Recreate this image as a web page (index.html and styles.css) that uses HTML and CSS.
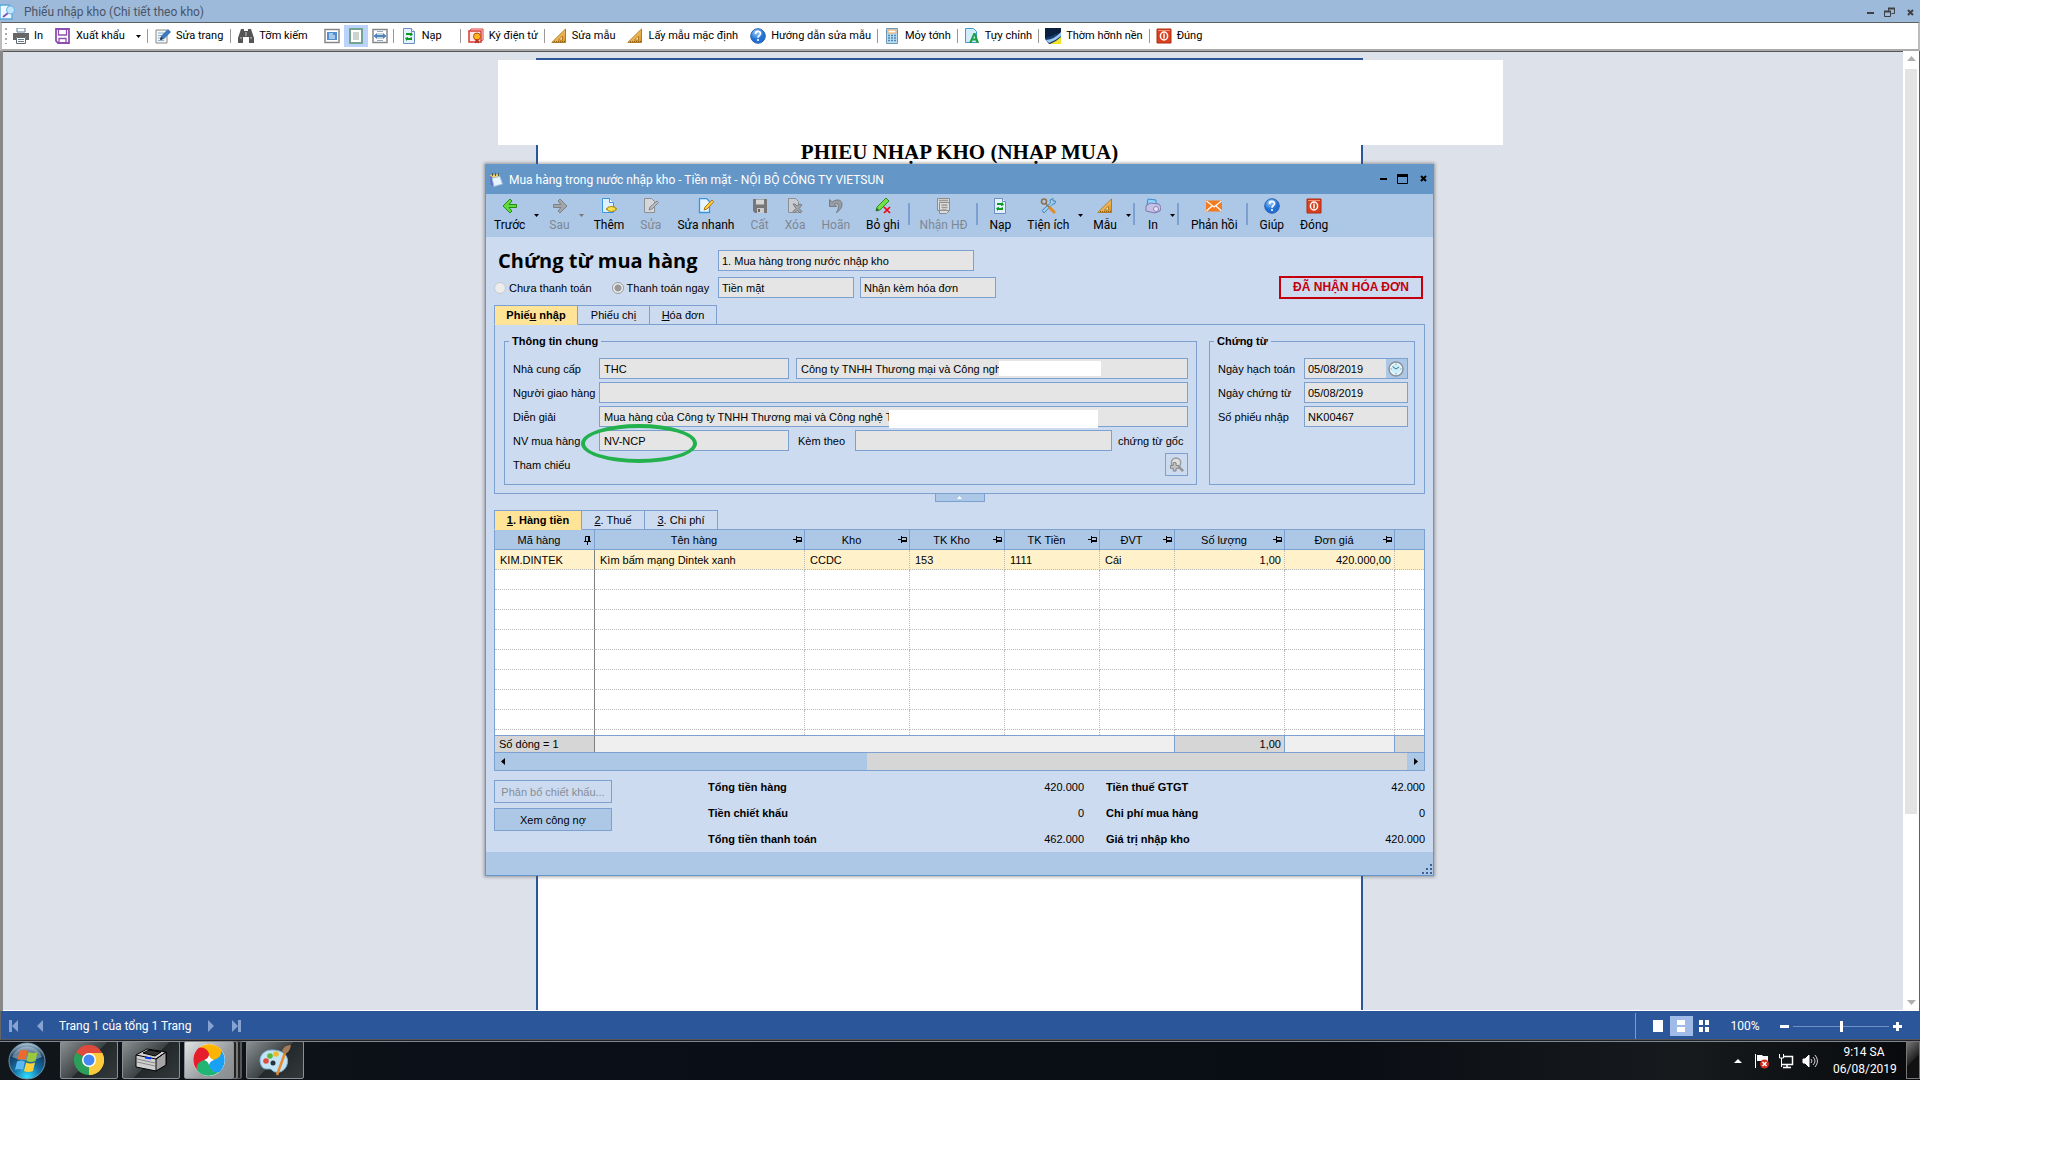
FILE: index.html
```html
<!DOCTYPE html>
<html lang="vi">
<head>
<meta charset="utf-8">
<title>Phiếu nhập kho</title>
<link rel="stylesheet" href="styles.css">
</head>
<body>
<svg class="defs" aria-hidden="true">
  <linearGradient id="gGold" x2="1" y2="1"><stop stop-color="#ffe9a0"/><stop offset="1" stop-color="#d98e1c"/></linearGradient>
  <radialGradient id="gHelp" cx=".4" cy=".25"><stop stop-color="#9cd0ff"/><stop offset="1" stop-color="#1f6fd6"/></radialGradient>
  <symbol id="printer" viewBox="0 0 16 16"><path d="M4 0h8v4H4z" fill="#fff" stroke="#5b7f9d"/><path d="M0 5h16v7h-3V9H3v3H0z" fill="#666"/><path d="M3.500 9.500h9v6h-9z" fill="#fff" stroke="#666"/><path d="M5 11.500h6M5 13.500h6" stroke="#5b7f9d"/></symbol>
  <symbol id="floppy" viewBox="0 0 16 16"><path d="M1 1h13v14H3l-2-2z" fill="#fff" stroke="#8e4fb0" stroke-width="1.800"/><path d="M3.500 1v6h8V1M4 15v-4.500h7V15" fill="none" stroke="#8e4fb0" stroke-width="1.300"/></symbol>
  <symbol id="pageedit" viewBox="0 0 16 16"><path d="M1 2h11v13H1z" fill="#f5f5f5" stroke="#888"/><path d="M3 5h6M3 7.500h4M3 10h4M3 12.500h6" stroke="#8bb0d6"/><path d="M5 12l1-4 7-7 3 3-7 7z" fill="#3d78bd"/><path d="M5 12l1-3 2 2z" fill="#222"/></symbol>
  <symbol id="binoc" viewBox="0 0 16 16"><path d="M3 1h3v2h4V1h3l3 9v5h-5V9H5v6H0v-5z" fill="#555"/><path d="M2 10h2M12 10h2M8 4v4" stroke="#ccc"/></symbol>
  <symbol id="viewtext" viewBox="0 0 16 16"><path d="M1 1.500h14v13H1z" fill="#fff" stroke="#888" stroke-width="1.500"/><path d="M3 4h10v8H3z" fill="#4f90d0"/><path d="M5 6h4M5 8h6M5 10h6" stroke="#fff"/></symbol>
  <symbol id="viewpage" viewBox="0 0 16 16"><path d="M2 1h12v14H2z" fill="#fff" stroke="#74a48c" stroke-width="2"/><path d="M5 5h6M5 7h6M5 9h6M5 11h6" stroke="#9aa8a0"/></symbol>
  <symbol id="viewwide" viewBox="0 0 16 16"><path d="M1 1.500h14v13H1z" fill="#fff" stroke="#888" stroke-width="1.500"/><path d="M5 3.500h6M5 12.500h6M5 6h6M5 10h6" stroke="#9ab"/><path d="M1.500 8L5 5v2h6V5l3.500 3L11 11V9H5v2z" fill="#4a83bd"/></symbol>
  <symbol id="reload" viewBox="0 0 16 16"><path d="M2.500.5h8l3 3v12h-11z" fill="#e6f1ff" stroke="#6b8ec4"/><path d="M10.500.5v3h3" fill="#fff" stroke="#6b8ec4"/><path d="M5 7V5h5V3.500L12 7l-3 1V7zM11 9v3H6v1.500L4 10l3-1v1h2z" fill="#0a9a1c"/></symbol>
  <symbol id="cert" viewBox="0 0 16 16"><path d="M2 3l1-2h12v11l-2 1" fill="#fff" stroke="#d83a34"/><path d="M1 3h12v11H1z" fill="#ffe9e4" stroke="#d83a34" stroke-width="1.500"/><circle cx="9" cy="8.500" r="3.500" fill="#ffb51c" stroke="#b84a18"/><path d="M7.500 11.500l-.5 4 2-1 2 1-.5-4z" fill="#b8321c"/></symbol>
  <symbol id="setsq" viewBox="0 0 16 16"><path d="M14.500 1v13.500H.8z" fill="url(#gGold)" stroke="#b57b22"/><path d="M11.500 8v4H7.500z" fill="#fff3cf" stroke="#b57b22"/><path d="M3 13.500h11" stroke="#8f5d12" stroke-dasharray="1 1"/></symbol>
  <symbol id="help" viewBox="0 0 16 16"><circle cx="8" cy="8" r="7.300" fill="url(#gHelp)" stroke="#2a62ad"/><path d="M5.500 6c0-3.500 5-3.200 5-.4C10.500 7.300 8 7.500 8 9.800" fill="none" stroke="#fff" stroke-width="1.700"/><circle cx="8" cy="12" r="1.100" fill="#fff"/></symbol>
  <symbol id="calc" viewBox="0 0 16 16"><path d="M2.500.5h11v15h-11z" fill="#bcdcf2" stroke="#6c98b8"/><path d="M4 2h8v3H4z" fill="#fff" stroke="#e2a55a"/><path d="M4 7.500h8M4 10h8M4 12.500h8" stroke="#4e88b8" stroke-width="1.500" stroke-dasharray="2 1"/></symbol>
  <symbol id="custom" viewBox="0 0 16 16"><path d="M1.500.5h8l3 3v11h-11z" fill="#d3ecfb" stroke="#3f9ad0"/><path d="M5 15L9.500 5h2L15 15h-2.500l-.8-2.500H8.500L7.500 15zM9.200 10.500h2l-1-3z" fill="#1fa045"/></symbol>
  <symbol id="wall" viewBox="0 0 16 16"><path d="M0 0h16v16H0z" fill="#123c6e"/><path d="M0 0h16v5C10 5 6 9 0 10z" fill="#0b1f3f"/><path d="M1 12Q10 11 16 4v4Q10 13 4 15z" fill="#9cc8f2"/><path d="M5 16q7-3 11-7v7z" fill="#f6e325"/><path d="M0 11l4 5H0z" fill="#fff"/></symbol>
  <symbol id="power" viewBox="0 0 16 16"><path d="M1 1h14v14H1z" fill="#d9401f" stroke="#b02c10"/><path d="M2 2h12v1H2z" fill="#f19377"/><ellipse cx="8" cy="8" rx="3.600" ry="4" fill="none" stroke="#fff" stroke-width="1.500"/><path d="M8 5.500v5" stroke="#fff" stroke-width="1.500"/></symbol>
  <symbol id="back" viewBox="0 0 16 16"><path d="M1 8l7-7 2 2-3 3.500h7.500v3H7L10 13l-2 2z" fill="#5fdc3a" stroke="#248b1a"/></symbol>
  <symbol id="fwd" viewBox="0 0 16 16"><path d="M15 8L8 1 6 3l3 3.500H1.500v3H9L6 13l2 2z" fill="#a2a6ab" stroke="#7c8085"/></symbol>
  <symbol id="add" viewBox="0 0 16 16"><path d="M1.500.5h7l4 4v10h-11z" fill="#dff1ff" stroke="#3796e0"/><path d="M8.500.5v4h4" fill="#fff" stroke="#3796e0"/><path d="M5 11l2-1 0-1 2 0 1-1 2 1 2 0 0 1 2 1-2 1 0 1-2 0-2 1-1-1-2 0 0-1z" fill="#f7df4e" stroke="#a68b1a"/></symbol>
  <symbol id="gedit" viewBox="0 0 16 16"><path d="M1.500.5h7l3 3v11h-10z" fill="#d4d6d9" stroke="#8b9096"/><path d="M6 12l1-3 7-6 1.500 1.500L9 11z" fill="#b9bcc0" stroke="#85898e"/></symbol>
  <symbol id="edit" viewBox="0 0 16 16"><path d="M1.500.5h7l3 3v11h-10z" fill="#e8f5ff" stroke="#3796e0" stroke-width="1.300"/><path d="M6 12l1-3 7-7 1.800 1.800L9 11z" fill="#ffcf3b" stroke="#b07616"/></symbol>
  <symbol id="gsave" viewBox="0 0 16 16"><path d="M1 1h14v14H3l-2-2z" fill="#777"/><path d="M4 1.500h8v5H4z" fill="#d5d5d5"/><path d="M5 10h7v5H5z" fill="#ccc"/><path d="M6 11h2v3H6z" fill="#666"/></symbol>
  <symbol id="gdel" viewBox="0 0 16 16"><path d="M1.500.5h7l3 3v11h-10z" fill="#c8cbd0" stroke="#8b9096"/><path d="M6 6l2 0 2 2 3-2 2 1-3 3.500 3 3-2 1.500-2.500-3-3 3-1.500-1.500 3-3z" fill="#a4a7ac" stroke="#767a80"/></symbol>
  <symbol id="undo" viewBox="0 0 16 16"><path d="M1.500 1.500v7h7L6.500 6.200C10 4.500 12.500 7 8.500 14.500 16 10 15.500 1.500 9 2 7 2.200 5.500 3 4.200 4z" fill="#999ca1" stroke="#777a80"/></symbol>
  <symbol id="unpost" viewBox="0 0 16 16"><path d="M1 13l1-4 9-9 3 3-9 9z" fill="#6fe04a" stroke="#2c8f20"/><path d="M1 13l1-3 2 2z" fill="#444"/><path d="M9 9l6 6M15 9l-6 6" stroke="#f00010" stroke-width="1.700"/></symbol>
  <symbol id="ginv" viewBox="0 0 16 16"><path d="M1.500.5h12v12h-12zM3.500 4.500h10v8l-3 3h-7z" fill="#dcdcdc" stroke="#8d8d8d"/><path d="M3 2.500h9M5.500 7h6M5.500 9.500h6M5.500 12h5" stroke="#999" stroke-width="1.300"/></symbol>
  <symbol id="tools" viewBox="0 0 16 16"><path d="M2 12.500L10.500 5 10 2l3-1.500V3l2.500 0L15 5.500l-3 1L4 15z" fill="#9fd0f2" stroke="#4684b5"/><circle cx="4" cy="3.500" r="2.500" fill="none" stroke="#8b7452" stroke-width="1.600"/><path d="M5.500 5.500l4 4" stroke="#8b7452" stroke-width="1.600"/><path d="M10 10l4 4" stroke="#e58a1d" stroke-width="3" stroke-linecap="round"/></symbol>
  <symbol id="cprint" viewBox="0 0 16 16"><path d="M3 1l8 1v5H2z" fill="#8fd4ff" stroke="#378ac8"/><path d="M1 8l4-3 9 1 2 3-1 4-5 2-9-2z" fill="#c5c0e6" stroke="#7d78ae"/><circle cx="11" cy="11" r="2.500" fill="#e8e5f8" stroke="#8a84b8"/></symbol>
  <symbol id="mail" viewBox="0 0 16 16"><path d="M0 2.500h16v11H0z" fill="#f47b20"/><path d="M.5 3l7.500 6 7.500-6M.5 13L6 8M15.500 13L10 8" fill="none" stroke="#fff" stroke-width="1.200"/></symbol>
  <symbol id="clock" viewBox="0 0 16 16"><circle cx="8" cy="8" r="7" fill="#c9eff8" stroke="#8a9297" stroke-width="1.500"/><circle cx="8" cy="8" r="5.500" fill="none" stroke="#fff"/><path d="M4.500 5.500L8 8l3-2" fill="none" stroke="#46708a"/><path d="M8 2.500v1M8 12.500v1M2.500 8h1M12.500 8h1" stroke="#46708a"/></symbol>
  <symbol id="zoomadd" viewBox="0 0 16 16"><path d="M10 10l5 5" stroke="#999" stroke-width="3"/><circle cx="7.500" cy="6" r="5" fill="#dedede" stroke="#999" stroke-width="1.500"/><path d="M4.500 6h3v3h3v3h-3v3h-3v-3h-3V9h3z" fill="#c4c4c4" stroke="#808080"/></symbol>
  <symbol id="pin" viewBox="0 0 10 10"><path d="M0 4.500h3M3.500 1v7M3 2.500h5.500V6" fill="none" stroke="#000"/><path d="M3 6h6" stroke="#000" stroke-width="2"/></symbol>
  <symbol id="pinup" viewBox="0 0 10 10"><path d="M4.500 10V7M1 6.500h7M2.500 7V1.500H6" fill="none" stroke="#000"/><path d="M6 7V1" stroke="#000" stroke-width="2"/></symbol>
  <symbol id="down" viewBox="0 0 5 3"><path d="M0 0h5L2.500 3z" fill="currentColor"/></symbol>
  <symbol id="doc" viewBox="0 0 16 16"><path d="M0 1h9l3 3v11H0z" fill="#eef7ff" stroke="#58a6dc" stroke-width="1.300"/><path d="M3 13l5-4" stroke="#7c55c0" stroke-width="2"/><circle cx="10.500" cy="6" r="4" fill="#bfe3fb" stroke="#6eb2e2"/></symbol>
  <symbol id="book" viewBox="0 0 16 16"><path d="M1 3l9-1 1 3-9 2z" fill="#f4d451"/><path d="M1 4l2.500 1L5 14.500l-3-2z" fill="#6f63c9"/><path d="M3 6l8-1.500 2.500 7.500L5 14.500z" fill="#e8f4ff" stroke="#9dbfe4"/><path d="M3.500 1v3M6.500 1v3M9.500 1v3" stroke="#555"/></symbol>
</svg>

<div class="desktop">
  <header class="titlebar">
    <svg class="ic"><use href="#doc"/></svg><span>Phiếu nhập kho (Chi tiết theo kho)</span>
    <svg class="winctl" width="56" height="14" viewBox="0 0 56 14" fill="none" stroke="#3e4046"><path d="M5 8h7" stroke-width="2"/><path d="M26.500 6V3.500h6v5h-3M22.500 6.500h6v5h-6z"/><path d="M26 3.500h7M22 6.500h7" stroke-width="2"/><path d="M46 5l5 5M51 5l-5 5" stroke-width="2"/></svg>
  </header>

  <nav class="toolbar">
    <i class="grip"></i>
    <button><svg class="ic"><use href="#printer"/></svg>In</button>
    <button><svg class="ic"><use href="#floppy"/></svg>Xuất khẩu</button><svg class="arr"><use href="#down"/></svg>
    <i class="sep"></i>
    <button><svg class="ic"><use href="#pageedit"/></svg>Sửa trang</button>
    <i class="sep"></i>
    <button><svg class="ic"><use href="#binoc"/></svg>Tỡm kiếm</button>
    <div class="views">
      <button aria-label="Văn bản"><svg class="ic"><use href="#viewtext"/></svg></button>
      <button class="on" aria-label="Trang"><svg class="ic"><use href="#viewpage"/></svg></button>
      <button aria-label="Rộng"><svg class="ic"><use href="#viewwide"/></svg></button>
    </div>
    <i class="sep"></i>
    <button><svg class="ic"><use href="#reload"/></svg>Nạp</button>
    <i class="sep wide"></i>
    <button><svg class="ic"><use href="#cert"/></svg>Ký điện tử</button>
    <i class="sep"></i>
    <button><svg class="ic"><use href="#setsq"/></svg>Sửa mẫu</button>
    <button><svg class="ic"><use href="#setsq"/></svg>Lấy mẫu mặc định</button>
    <button><svg class="ic"><use href="#help"/></svg>Hướng dẫn sửa mẫu</button>
    <i class="sep"></i>
    <button><svg class="ic"><use href="#calc"/></svg>Mỏy tớnh</button>
    <i class="sep"></i>
    <button><svg class="ic"><use href="#custom"/></svg>Tựy chỉnh</button>
    <i class="sep"></i>
    <button><svg class="ic"><use href="#wall"/></svg>Thờm hỡnh nền</button>
    <i class="sep"></i>
    <button><svg class="ic"><use href="#power"/></svg>Đúng</button>
  </nav>

  <main class="viewer">
    <div class="canvas">
      <article class="sheet"><h1>PHIẾU NHẬP KHO (NHẬP MUA)</h1></article>
    </div>
    <div class="vscroll">
      <svg width="9" height="5" viewBox="0 0 9 5"><path d="M0 5h9L4.500 0z" fill="#b0b0b0"/></svg>
      <i></i>
      <svg width="9" height="5" viewBox="0 0 9 5"><path d="M0 0h9L4.500 5z" fill="#b0b0b0"/></svg>
    </div>
  </main>
  <div class="cover"></div>

  <section class="window">
    <header class="wtitle">
      <svg class="ic"><use href="#book"/></svg><span>Mua hàng trong nước nhập kho - Tiền mặt - NỘI BỘ CÔNG TY VIETSUN</span>
      <svg class="winctl" width="56" height="14" viewBox="0 0 56 14" fill="none" stroke="#000"><path d="M5 8h7" stroke-width="2"/><path d="M22.500 4.500h10v8h-10z"/><path d="M22 4.500h11" stroke-width="3"/><path d="M46 5l5 5M51 5l-5 5" stroke-width="2"/></svg>
    </header>
    <nav class="wtools">
      <button><svg class="ic"><use href="#back"/></svg>Trước</button><svg class="arr"><use href="#down"/></svg>
      <button disabled><svg class="ic"><use href="#fwd"/></svg>Sau</button><svg class="arr off"><use href="#down"/></svg>
      <button><svg class="ic"><use href="#add"/></svg>Thêm</button>
      <button disabled><svg class="ic"><use href="#gedit"/></svg>Sửa</button>
      <button><svg class="ic"><use href="#edit"/></svg>Sửa nhanh</button>
      <button disabled><svg class="ic"><use href="#gsave"/></svg>Cất</button>
      <button disabled><svg class="ic"><use href="#gdel"/></svg>Xóa</button>
      <button disabled><svg class="ic"><use href="#undo"/></svg>Hoãn</button>
      <button><svg class="ic"><use href="#unpost"/></svg>Bỏ ghi</button>
      <i class="wsep tight"></i>
      <button disabled><svg class="ic"><use href="#ginv"/></svg>Nhận HĐ</button>
      <i class="wsep"></i>
      <button><svg class="ic"><use href="#reload"/></svg>Nạp</button>
      <button><svg class="ic"><use href="#tools"/></svg>Tiện ích</button><svg class="arr"><use href="#down"/></svg>
      <button><svg class="ic"><use href="#setsq"/></svg>Mẫu</button><svg class="arr"><use href="#down"/></svg>
      <i class="wsep tight"></i>
      <button><svg class="ic"><use href="#cprint"/></svg>In</button><svg class="arr"><use href="#down"/></svg>
      <i class="wsep"></i>
      <button><svg class="ic"><use href="#mail"/></svg>Phản hồi</button>
      <i class="wsep"></i>
      <button><svg class="ic"><use href="#help"/></svg>Giúp</button>
      <button><svg class="ic"><use href="#power"/></svg>Đóng</button>
    </nav>

    <form class="wbody">
      <div class="head">
        <h2>Chứng từ mua hàng</h2>
        <div class="line"><input class="kind" aria-label="Loại chứng từ" readonly value="1. Mua hàng trong nước nhập kho"></div>
        <div class="line radios">
          <label><input type="radio" name="pay" disabled>Chưa thanh toán</label>
          <label><input type="radio" name="pay" checked disabled>Thanh toán ngay</label>
        </div>
        <div class="line">
          <input class="half" aria-label="Hình thức" readonly value="Tiền mặt">
          <input class="half" aria-label="Hóa đơn" readonly value="Nhận kèm hóa đơn">
          <strong class="stamp">ĐÃ NHẬN HÓA ĐƠN</strong>
        </div>
      </div>

      <div class="tabs">
        <button type="button" class="t1 on">Phiế<u>u</u> nhập</button><button type="button" class="t2">Phiếu ch<u>ị</u></button><button type="button" class="t3"><u>H</u>óa đơn</button>
      </div>
      <div class="panel">
        <fieldset class="general">
          <legend>Thông tin chung</legend>
          <div class="rows">
            <label for="ncc">Nhà cung cấp</label>
            <div class="line"><input id="ncc" class="code" readonly value="THC"><span class="fld grow"><input aria-label="Tên nhà cung cấp" readonly value="Công ty TNHH Thương mại và Công ngh"><i class="mask m1"></i></span></div>
            <label for="ngh">Người giao hàng</label>
            <div class="line"><input id="ngh" class="grow" readonly></div>
            <label for="dg">Diễn giải</label>
            <div class="line"><span class="fld grow"><input id="dg" readonly value="Mua hàng của Công ty TNHH Thương mại và Công nghệ T"><i class="mask m2"></i></span></div>
            <label for="nv">NV mua hàng</label>
            <div class="line"><span class="fld code"><input id="nv" readonly value="NV-NCP"><i class="ring"></i></span><label for="kt" class="kt">Kèm theo</label><input id="kt" class="grow" readonly><span class="orig">chứng từ gốc</span></div>
          </div>
          <div class="ref"><span>Tham chiếu</span><button type="button" class="find" aria-label="Tìm tham chiếu"><svg class="ic"><use href="#zoomadd"/></svg></button></div>
        </fieldset>
        <fieldset class="voucher">
          <legend>Chứng từ</legend>
          <div class="rows">
            <label for="d1">Ngày hạch toán</label>
            <div class="line"><span class="fld grow dt"><input id="d1" readonly value="05/08/2019"><button type="button" class="clk" aria-label="Giờ"><svg class="ic"><use href="#clock"/></svg></button></span></div>
            <label for="d2">Ngày chứng từ</label>
            <div class="line"><input id="d2" class="grow" readonly value="05/08/2019"></div>
            <label for="so">Số phiếu nhập</label>
            <div class="line"><input id="so" class="grow" readonly value="NK00467"></div>
          </div>
        </fieldset>
      </div>
      <button type="button" class="handle" aria-label="Thu gọn"><svg width="5" height="3" viewBox="0 0 5 3"><path d="M0 3h5L2.500 0z" fill="#fff"/></svg></button>

      <div class="tabs detail">
        <button type="button" class="g1 on"><u>1</u>. Hàng tiền</button><button type="button" class="g2"><u>2</u>. Thuế</button><button type="button" class="g3"><u>3</u>. Chi phí</button>
      </div>
      <div class="grid">
        <table>
          <colgroup><col class="c100"><col class="c210"><col class="c105"><col class="c95"><col class="c95"><col class="c75"><col class="c110"><col class="c110"><col></colgroup>
          <thead><tr>
            <th><div>Mã hàng<svg class="pin"><use href="#pinup"/></svg></div></th>
            <th><div>Tên hàng<svg class="pin"><use href="#pin"/></svg></div></th>
            <th><div>Kho<svg class="pin"><use href="#pin"/></svg></div></th>
            <th><div>TK Kho<svg class="pin"><use href="#pin"/></svg></div></th>
            <th><div>TK Tiền<svg class="pin"><use href="#pin"/></svg></div></th>
            <th><div>ĐVT<svg class="pin"><use href="#pin"/></svg></div></th>
            <th><div>Số lượng<svg class="pin"><use href="#pin"/></svg></div></th>
            <th><div>Đơn giá<svg class="pin"><use href="#pin"/></svg></div></th>
            <th></th>
          </tr></thead>
          <tbody>
            <tr class="sel"><td>KIM.DINTEK</td><td>Kìm bấm mạng Dintek xanh</td><td>CCDC</td><td>153</td><td>1111</td><td>Cái</td><td class="num">1,00</td><td class="num">420.000,00</td><td></td></tr>
            <tr><td></td><td></td><td></td><td></td><td></td><td></td><td></td><td></td><td></td></tr>
            <tr><td></td><td></td><td></td><td></td><td></td><td></td><td></td><td></td><td></td></tr>
            <tr><td></td><td></td><td></td><td></td><td></td><td></td><td></td><td></td><td></td></tr>
            <tr><td></td><td></td><td></td><td></td><td></td><td></td><td></td><td></td><td></td></tr>
            <tr><td></td><td></td><td></td><td></td><td></td><td></td><td></td><td></td><td></td></tr>
            <tr><td></td><td></td><td></td><td></td><td></td><td></td><td></td><td></td><td></td></tr>
            <tr><td></td><td></td><td></td><td></td><td></td><td></td><td></td><td></td><td></td></tr>
            <tr><td></td><td></td><td></td><td></td><td></td><td></td><td></td><td></td><td></td></tr>
            <tr class="last"><td></td><td></td><td></td><td></td><td></td><td></td><td></td><td></td><td></td></tr>
          </tbody>
          <tfoot><tr><td class="dk">Số dòng = 1</td><td colspan="5"></td><td class="dk num">1,00</td><td></td><td class="dk"></td></tr></tfoot>
        </table>
        <div class="hscroll">
          <span class="thumb"><svg width="4" height="7" viewBox="0 0 4 7"><path d="M4 0v7L0 3.500z"/></svg></span>
          <span class="next"><svg width="4" height="7" viewBox="0 0 4 7"><path d="M0 0v7l4-3.500z"/></svg></span>
        </div>
      </div>

      <div class="totals">
        <div class="actions"><button type="button" class="act" disabled>Phân bổ chiết khấu...</button><button type="button" class="act">Xem công nợ</button></div>
        <dl><dt>Tổng tiền hàng</dt><dd>420.000</dd><dt>Tiền chiết khấu</dt><dd>0</dd><dt>Tổng tiền thanh toán</dt><dd>462.000</dd></dl>
        <dl><dt>Tiền thuế GTGT</dt><dd>42.000</dd><dt>Chi phí mua hàng</dt><dd>0</dd><dt>Giá trị nhập kho</dt><dd>420.000</dd></dl>
      </div>
    </form>
    <footer class="wfoot"><svg width="11" height="11" viewBox="0 0 11 11" fill="#3e5f94"><path d="M8 0h2v2H8zM4 4h2v2H4zM8 4h2v2H8zM0 8h2v2H0zM4 8h2v2H4zM8 8h2v2H8z"/></svg></footer>
  </section>

  <footer class="status">
    <svg class="nav" viewBox="0 0 10 12"><path d="M0 0h3v12H0zM9 0v12L3 6z"/></svg>
    <svg class="nav" viewBox="0 0 10 12"><path d="M8 0v12L2 6z"/></svg>
    <span class="pages">Trang 1 của tổng 1 Trang</span>
    <svg class="nav" viewBox="0 0 10 12"><path d="M2 0v12l6-6z"/></svg>
    <svg class="nav" viewBox="0 0 10 12"><path d="M7 0h3v12H7zM1 0v12l6-6z"/></svg>
    <div class="zoom">
      <button aria-label="Một trang"><svg width="12" height="12"><path d="M1 0h10v12H1z"/></svg></button>
      <button class="on" aria-label="Liên tục"><svg width="12" height="12"><path d="M2 0h8v5H2zM2 7h8v5H2z"/></svg></button>
      <button aria-label="Nhiều trang"><svg width="12" height="12"><path d="M1 0h4v5H1zM7 0h4v5H7zM1 7h4v5H1zM7 7h4v5H7z"/></svg></button>
      <span class="pct">100%</span>
      <svg width="9" height="9"><path d="M0 3h9v3H0z"/></svg>
      <input type="range" aria-label="Thu phóng" value="50">
      <svg width="9" height="9"><path d="M0 3h9v3H0zM3 0h3v9H3z"/></svg>
    </div>
  </footer>

  <footer class="taskbar">
    <button class="orb" aria-label="Start"><svg width="38" height="38" viewBox="0 0 38 38"><defs><radialGradient id="gOrb" cy=".95" r=".95"><stop stop-color="#2ee0ff"/><stop offset=".4" stop-color="#1671a8"/><stop offset=".75" stop-color="#123c60"/><stop offset="1" stop-color="#b8d0e0"/></radialGradient></defs><circle cx="19" cy="19" r="18" fill="url(#gOrb)" stroke="#7694aa"/><path d="M4 15A16 16 0 0134 15Q19 22 4 15z" fill="#fff" opacity=".35"/><path d="M11.500 9q4-2 8 0l-2 9q-4-2-8 0z" fill="#ee6a2c"/><path d="M20.500 10q4.500 2 9 0l-2 9q-4.500 2-9 0z" fill="#9ac93d"/><path d="M9 19.500q4-2 8 0l-2 8.500q-4-2-8 0z" fill="#5bb8f0"/><path d="M18 20.500q4.500 2 9 0l-2 8.500q-4.500 2-9 0z" fill="#fbd13a"/></svg></button>
    <button class="task" aria-label="Chrome"><svg width="30" height="30" viewBox="0 0 30 30"><path d="M15 15L2 7.500A15 15 0 0128 7.500z" fill="#e04a3c"/><path d="M15 15L28 7.500A15 15 0 0115 30z" fill="#fccb3c"/><path d="M15 15v15A15 15 0 012 7.500z" fill="#2c9f58"/><path d="M15 8h13.200A15 15 0 0115 30l6.500-11z" fill="#fccb3c"/><path d="M8.500 18.500L2 7.500 8 15z" fill="#2c9f58"/><circle cx="15" cy="15" r="7" fill="#fff"/><circle cx="15" cy="15" r="5.500" fill="#4688f1"/></svg></button>
    <button class="task" aria-label="Máy in"><svg width="32" height="26" viewBox="0 0 32 26" stroke="#000"><path d="M1 8l11-6 19 3v13l-10 6L1 20z" fill="#d0d0d0"/><path d="M21 12l10-7v13l-10 6z" fill="#a5a5a5"/><path d="M1 8l20 4 10-7" fill="none"/><path d="M8 6l6-3 12 2-6 4z" fill="#333"/><path d="M2 12l18 4M2 15l18 4" fill="none" stroke="#888"/><path d="M10 10.500l6 1" stroke="#0038ff" stroke-width="2"/></svg></button>
    <button class="task lit" aria-label="Ứng dụng"><svg width="32" height="32" viewBox="0 0 32 32"><circle cx="16" cy="16" r="16" fill="#fff"/><path d="M16 12C15 6 11 3 6 4A16 16 0 0128 5.500C30 12 24 17 20 16 18 16 16 14 16 12z" fill="#ffb400"/><path d="M20 16C26 15 29 11 28 6A16 16 0 0126.500 28C20 30 15 24 16 20 16 18 18 16 20 16z" fill="#19a1f3"/><path d="M16 20C17 26 21 29 26 28A16 16 0 014 26.500C2 20 8 15 12 16 14 16 16 18 16 20z" fill="#21b573"/><path d="M12 16C6 17 3 21 4 26A16 16 0 015.500 4C12 2 17 8 16 12 16 14 14 16 12 16z" fill="#e61e2c"/><path d="M16 11q1 4 5 5-4 1-5 5-1-4-5-5 4-1 5-5z" fill="#fff"/></svg></button>
    <button class="task" aria-label="Paint"><svg width="34" height="32" viewBox="0 0 34 32"><path d="M14 6C4 6 0 14 3 21s9 2 11 5 10 4 14-3 1-17-14-17z" fill="#c3e4f5" stroke="#78b2d4"/><circle cx="8" cy="17" r="2.800" fill="#e04c3c"/><circle cx="12" cy="12" r="2.800" fill="#5bb73a"/><circle cx="18" cy="10" r="2.800" fill="#f2b92c"/><circle cx="15" cy="19" r="2.500" fill="#26333c"/><path d="M27 9l-8 22" stroke="#e8892c" stroke-width="2.500"/><path d="M24 7q2-6 9-6-1 7-6 9z" fill="#a87c58"/></svg></button>
    <div class="tray">
      <svg width="8" height="4" viewBox="0 0 8 4"><path d="M0 4h8L4 0z" fill="#fff"/></svg>
      <svg width="16" height="16" viewBox="0 0 16 16"><path d="M1.500 1v14" stroke="#fff"/><path d="M3 2h5l1 1h5v6H8L7 8H3z" fill="#fff"/><circle cx="10.500" cy="11" r="4.500" fill="#d42a1e"/><path d="M8.500 9l4 4M12.500 9l-4 4" stroke="#fff" stroke-width="1.500"/></svg>
      <svg width="16" height="16" viewBox="0 0 16 16" fill="none" stroke="#fff"><path d="M6 3.500h8.500v8H4M5 14.500h8M9 12v2" stroke-width="1.500"/><path d="M1.500 1v4h4V1M3.500 5v9"/></svg>
      <svg width="16" height="16" viewBox="0 0 16 16" fill="none" stroke="#fff"><path d="M1 6h2l4-4v12l-4-4H1z" fill="#fff"/><path d="M9 6q2 2 0 4M11 4q4 4 0 8M13 2q5 6 0 12" opacity=".8"/></svg>
      <time>9:14 SA<br>06/08/2019</time>
    </div>
    <i class="peek"></i>
  </footer>
</div>
</body>
</html>
```
FILE: styles.css
```css
* { box-sizing: border-box; }
:root {
  --line: #7ca1d1;
  --bar: #adc7e6;
  --pane: #ccdbf0;
  --ui: Roboto, "Noto Sans", sans-serif;
  --form: "Liberation Sans", Arial, sans-serif;
}
body { margin: 0; padding: 0 140px 72px 0; background: #fff; font: 11px/14px var(--form); color: #000; }
button { font: inherit; color: inherit; background: none; border: 0; padding: 0; margin: 0; }
input { font: inherit; color: inherit; min-width: 0; margin: 0; }
i { display: block; flex: none; }
svg { flex: none; display: block; }
.defs { position: absolute; width: 0; height: 0; }
.ic { width: 16px; height: 16px; }
.arr { width: 5px; height: 3px; }
.arr.off { color: #777; }
.desktop { position: relative; display: flex; flex-direction: column; min-height: calc(100vh - 72px); }

.titlebar { display: flex; align-items: center; height: 22px; padding: 2px 2px 0 0; gap: 8px; background: #9dbadb; color: #4a5468; font: 12px/16px var(--ui); }
.winctl { margin-left: auto; }

.toolbar { display: flex; align-items: center; height: 29px; padding: 0 3px; background: #fff; border: 2px solid #bcbcbc; border-top: 1px solid #606060; border-bottom: 2px solid #aaa; font: 11px/14px var(--ui); white-space: nowrap; }
.toolbar button { display: flex; align-items: center; gap: 5px; padding: 0 6px; height: 22px; }
.grip { width: 2px; height: 16px; background: repeating-linear-gradient(#aaa 0 2px, transparent 2px 5px); }
.sep { width: 1px; height: 14px; background: #999; margin: 0 1px; }
.sep.wide { margin-left: 12px; }
.sep.wide ~ .sep { margin: 0; }
.toolbar .arr { margin: 0 5px; }
.views { display: flex; padding-left: 6px; }
.toolbar .views button { padding: 0 4px; }
.views .on { background: #bbd2fb; }

.viewer { display: flex; flex: 1; border-left: 3px solid #888; border-right: 1px solid #606060; background: #fff; }
.canvas { flex: 1; display: flex; padding: 6px 540px 0 533px; background: #dde1e9; border-top: 1px solid #555; margin-bottom: 1px; }
.sheet { flex: 1; background: #fff; border: 2px solid #2b579a; border-bottom: 0; padding-top: 79px; text-align: center; }
.sheet h1 { margin: 0; padding-left: 20px; font: bold 21px/26px "Liberation Serif", serif; }
.vscroll { width: 16px; display: flex; flex-direction: column; align-items: center; padding: 5px 0 6px; }
.vscroll i { width: 12px; flex: 1; margin: 8px 0 186px; background: #e3e3e3; }
.cover { position: absolute; left: 498px; right: 417px; top: 60px; height: 85px; background: #fff; }

.window { position: absolute; left: 485px; right: 486px; top: 164px; border: 1px solid #6496c8; background: var(--pane); box-shadow: 0 0 3px 1px rgba(80,80,80,.5); }
.wtitle { display: flex; align-items: center; gap: 4px; height: 29px; padding: 0 2px 0 3px; background: #6496c8; color: #fff; font: 12px/16px var(--ui); }
.wtitle .winctl { margin-bottom: 3px; }
.wtools { display: flex; height: 43px; background: var(--bar); font: 12px/16px var(--ui); white-space: nowrap; }
.wtools button { display: flex; flex-direction: column; align-items: center; gap: 3px; padding: 4px 8px 0; }
.wtools button:disabled { color: #7f8792; }
.wtools .arr { margin: 20px 2px 0 1px; }
.wsep { width: 2px; height: 22px; margin: 9px 4px 0 0; background: var(--line); }
.wsep.tight { margin-right: 2px; }

.wbody { display: flex; flex-direction: column; padding: 13px 8px 6px; }
.head { display: grid; grid-template-columns: 224px 1fr; row-gap: 6px; }
h2 { margin: 0 0 0 4px; font: bold 20px/21px "Open Sans", sans-serif; white-space: nowrap; }
.line { display: flex; align-items: center; height: 21px; }
.wbody input:not([type]) { height: 21px; padding: 0 4px; border: 1px solid var(--line); background: #e5e5e5; border-radius: 0; outline: 0; }
.wbody .head input:not([type]), .wbody .voucher input:not([type]) { padding: 0 3px; }
.kind { width: 256px; }
.half { width: 136px; margin-right: 6px; }
.radios { gap: 20px; white-space: nowrap; }
.radios label { display: flex; align-items: center; gap: 3px; }
.radios input { appearance: none; width: 12px; height: 12px; border-radius: 50%; border: 1px solid #c4c8cc; background: #ececec; }
.radios input:checked { border-color: #999; background: radial-gradient(circle, #999 0 3px, #eee 4px); }
.stamp { margin-left: auto; margin-right: 2px; width: 144px; height: 23px; border: 2px solid #c4000d; color: #c4000d; font-size: 12px; line-height: 19px; text-align: center; white-space: nowrap; }

.tabs { display: flex; margin-top: 7px; position: relative; z-index: 1; margin-bottom: -1px; }
.tabs.detail { margin-top: 8px; }
.tabs button { height: 20px; border: 1px solid var(--line); border-left-width: 0; text-align: center; }
.tabs button:first-child { border-left-width: 1px; }
.tabs .on { background: #ffe396; border-bottom-color: #ffe396; font-weight: bold; }
.t1 { width: 84px; } .t2 { width: 72px; } .t3 { width: 67px; }
.g1 { width: 88px; } .g2 { width: 63px; } .g3 { width: 73px; }
.panel { display: flex; gap: 12px; padding: 9px 9px 8px; border: 1px solid var(--line); }
fieldset { margin: 0; min-width: 0; padding: 10px 8px 8px; border: 1px solid var(--line); }
legend { margin-left: -4px; padding: 0 3px; font-weight: bold; line-height: 14px; }
.general { flex: 1; }
.voucher { width: 206px; padding-right: 6px; }
.rows { display: grid; grid-template-columns: 86px minmax(0, 1fr); row-gap: 3px; align-items: center; white-space: nowrap; }
.code { width: 190px; }
.grow { flex: 1; min-width: 0; }
.fld { position: relative; display: flex; }
.fld input { flex: 1; width: 0; }
.line > .code + .fld { margin-left: 7px; }
.mask { position: absolute; background: #fff; }
.m1 { left: 203px; top: 3px; width: 102px; height: 15px; }
.m2 { left: 290px; top: 4px; width: 209px; height: 18px; }
.ring { position: absolute; left: -18px; top: -6px; width: 116px; height: 39px; border: 4px solid #22b14c; border-radius: 50%; }
.kt { width: 66px; padding-left: 9px; }
.orig { width: 76px; padding-left: 6px; }
.ref { display: flex; justify-content: space-between; align-items: center; margin-top: 2px; }
.find { width: 23px; height: 23px; padding: 3px; border: 1px solid var(--line); }
.find .ic { width: 15px; height: 15px; }
.wbody .dt input:not([type]) { border-right: 0; }
.clk { width: 22px; height: 21px; padding: 1px 2px; border: 1px solid var(--line); border-left: 0; background: var(--bar); }
.handle { align-self: center; width: 50px; height: 9px; margin-top: -1px; border: 1px solid var(--line); background: var(--bar); display: flex; justify-content: center; align-items: center; }

.grid { border: 1px solid var(--line); }
.grid table { width: 100%; table-layout: fixed; border-collapse: separate; border-spacing: 0; background: #fff; }
.c75 { width: 75px; } .c95 { width: 95px; } .c100 { width: 100px; } .c105 { width: 105px; } .c110 { width: 110px; } .c210 { width: 210px; }
th, td { padding: 0 5px; height: 20px; white-space: nowrap; overflow: hidden; text-align: left; font-weight: normal; }
th { padding: 0 1px 0 0; background: var(--bar); border-right: 1px solid var(--line); border-bottom: 1px solid var(--line); text-align: center; }
th div { display: grid; grid-template-columns: 1fr 10px; align-items: center; }
.pin { width: 10px; height: 10px; }
tbody td { border-right: 1px dotted #bbb; border-bottom: 1px dotted #bbb; }
tbody td:first-child, tfoot td:first-child { border-right: 1px solid #808080; }
th:last-child, td:last-child { border-right: 0; }
.sel td { background: #fff1ca; }
.last td { height: 5px; border-bottom: 0; }
.num { text-align: right; padding-right: 3px; }
tfoot td { height: 17px; padding: 0 4px; line-height: 14px; background: #efefef; border-top: 1px solid var(--line); border-right: 1px solid var(--line); }
tfoot .dk { background: #d6d6d6; }
.hscroll { display: flex; justify-content: space-between; height: 18px; border-top: 1px solid var(--line); background: #d6d6d6; }
.thumb { width: 40%; display: flex; align-items: center; padding-left: 6px; background: var(--bar); }
.next { width: 17px; display: flex; align-items: center; justify-content: center; background: var(--bar); }

.totals { display: grid; grid-template-columns: 118px 1fr 319px; padding-top: 9px; }
.actions { display: grid; gap: 5px; align-content: start; }
.act { height: 23px; border: 1px solid var(--line); background: var(--bar); }
.act:disabled { background: none; color: #868d98; }
dl { display: grid; grid-template-columns: 1fr auto; margin: 0; row-gap: 12px; }
dl:nth-child(2) { padding-left: 96px; padding-right: 22px; }
dt { font-weight: bold; }
dd { margin: 0; text-align: right; }
.wfoot { display: flex; justify-content: flex-end; align-items: flex-end; height: 23px; background: var(--bar); }

.status { display: flex; align-items: center; height: 29px; padding: 2px 18px 0 8px; border-left: 1px solid #666; border-bottom: 1px solid #555; background: #2b579a; color: #fff; font: 12px/16px var(--ui); }
.status svg { fill: #fff; }
.status .nav { width: 10px; height: 12px; fill: #86a3d2; }
.nav:nth-child(2) { margin: 0 14px 0 16px; }
.nav:nth-child(4) { margin: 0 15px; }
.zoom { margin-left: auto; display: flex; align-items: center; height: 26px; padding-left: 11px; border-left: 1px solid #7d99c8; }
.zoom button { width: 23px; height: 20px; padding: 4px 5px; }
.zoom .on { background: #a0bbe8; }
.pct { width: 64px; padding-right: 6px; text-align: center; }
.zoom input { appearance: none; width: 96px; height: 12px; margin: 0 4px; background: linear-gradient(#6f91c6, #6f91c6) center / 100% 1px no-repeat; }
.zoom input::-webkit-slider-thumb { appearance: none; width: 3px; height: 11px; background: #fff; }

.taskbar { display: flex; align-items: stretch; height: 40px; border-top: 1px solid #20242a; background: linear-gradient(#7f8892 0 1px, transparent 1px), linear-gradient(90deg, #10161a, #0a0f18 30%, #0a0e14 70%, #171a1d 88%, #07090c); color: #fff; font: 12px/17px var(--ui); }
.orb { margin: 0 14px 0 8px; }
.task { width: 58px; height: 38px; margin-right: 4px; display: flex; align-items: center; justify-content: center; border: 1px solid #8a8f93; border-radius: 2px; background: linear-gradient(135deg, #8b9093, #3c4144 50%, #23282b 51%, #33383b); }
.lit { width: 50px; margin-right: 12px; background: linear-gradient(135deg, #e0e2e3, #9a9d9f 60%, #8a8d8f); box-shadow: 3px 0 0 -1px #222, 4px 0 0 #777, 7px 0 0 -1px #222, 8px 0 0 #555; }
.tray { margin-left: auto; display: flex; align-items: center; gap: 8px; padding-right: 11px; }
.tray svg:first-child { margin-right: 4px; }
time { width: 62px; margin-left: 7px; text-align: center; }
.peek { width: 14px; margin-bottom: 1px; border: 1px solid #777; background: linear-gradient(135deg, #777, #222 50%, #111 51%); }
```
